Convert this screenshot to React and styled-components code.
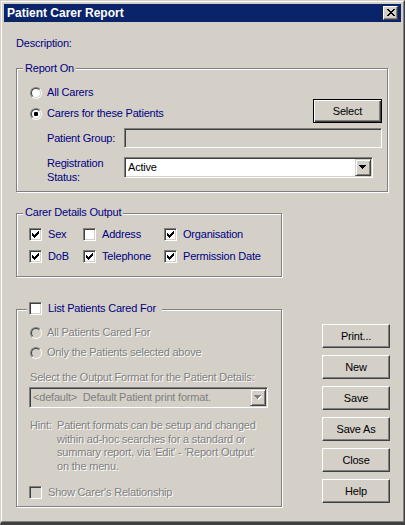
import React from 'react';
import styled, { createGlobalStyle, css } from 'styled-components';

const FACE = '#d4d0c8';
const SHADOW = '#808080';
const DARK = '#404040';
const NAVY = '#000080';

const GlobalStyle = createGlobalStyle`
  html, body { margin: 0; padding: 0; background: ${FACE}; }
  body { font-family: "Liberation Sans", Arial, sans-serif; font-size: 11px; }
  * { box-sizing: border-box; }
`;

const sunken = css`
  border: 1px solid;
  border-color: ${SHADOW} #fff #fff ${SHADOW};
  box-shadow: inset 1px 1px 0 ${DARK}, inset -1px -1px 0 ${FACE};
`;

const raised = css`
  border: 1px solid;
  border-color: #fff ${DARK} ${DARK} #fff;
  box-shadow: inset -1px -1px 0 ${SHADOW};
`;

const Window = styled.div`
  width: 405px;
  height: 525px;
  background: ${FACE};
  border: 1px solid;
  border-color: ${FACE} ${DARK} ${DARK} ${FACE};
  border-bottom-width: 3px;
  display: flex;
  flex-direction: column;
`;

const Frame = styled.div`
  flex: 1;
  border: 1px solid;
  border-color: #fff ${SHADOW} ${SHADOW} #fff;
  padding: 2px;
  display: flex;
  flex-direction: column;
`;

const TitleBar = styled.div`
  height: 18px;
  flex: none;
  background: #0a246a;
  display: flex;
  align-items: center;
  justify-content: space-between;
  padding: 0 3px 0 3px;
`;

const TitleText = styled.span`
  color: #fff;
  font-weight: bold;
  font-size: 12px;
  line-height: 14px;
`;

const CloseButton = styled.span`
  width: 15px;
  height: 14px;
  background: ${FACE};
  ${raised};
  display: flex;
  align-items: center;
  justify-content: center;
  padding-bottom: 1px;
`;

const Body = styled.div`
  flex: 1;
  padding: 15px 13px 0 12px;
  display: flex;
  flex-direction: column;
`;

const Label = styled.span`
  color: ${p => (p.$disabled ? SHADOW : NAVY)};
  text-shadow: ${p => (p.$disabled ? '1px 1px 0 #fff' : 'none')};
  line-height: 13px;
  letter-spacing: -0.2px;
  white-space: nowrap;
`;

const Description = styled(Label)`
  display: block;
  height: 13px;
`;

const Group = styled.div`
  position: relative;
  flex: none;
  border: 1px solid ${SHADOW};
  box-shadow: 1px 1px 0 #fff, inset 1px 1px 0 #fff;
  margin-top: ${p => p.$mt}px;
  width: ${p => (p.$w ? `${p.$w}px` : 'auto')};
  padding: ${p => p.$pad};
  display: flex;
  flex-direction: column;
`;

const Legend = styled.div`
  position: absolute;
  top: ${p => p.$top}px;
  left: ${p => p.$left}px;
  padding: ${p => p.$pad};
  background: ${FACE};
  display: flex;
  align-items: center;
  height: 13px;
`;

const OptionRow = styled.div`
  display: flex;
  align-items: center;
  height: 13px;
  gap: ${p => p.$gap}px;
  margin-top: ${p => p.$mt || 0}px;
  flex: none;
`;

const RadioCircle = styled.span`
  position: relative;
  flex: none;
  width: 12px;
  height: 12px;
  margin-left: 1px;
  border-radius: 50%;
  border: 1px solid;
  border-color: ${SHADOW} #fff #fff ${SHADOW};
  &::before {
    content: '';
    position: absolute;
    inset: 0;
    border-radius: 50%;
    border: 1px solid;
    border-color: ${DARK} ${FACE} ${FACE} ${DARK};
    background: ${p => (p.$disabled ? FACE : '#fff')};
  }
  &::after {
    content: ${p => (p.$checked ? "''" : 'none')};
    position: absolute;
    left: 3px;
    top: 3px;
    width: 4px;
    height: 4px;
    border-radius: 1px;
    background: #000;
  }
`;

const CheckBox = styled.span`
  flex: none;
  width: 13px;
  height: 13px;
  ${sunken};
  background: ${p => (p.$disabled ? FACE : '#fff')};
  display: flex;
  align-items: center;
  justify-content: center;
`;

const PushButton = styled.button`
  width: ${p => p.$w || 68}px;
  height: 24px;
  flex: none;
  padding: 0;
  background: ${FACE};
  color: #000;
  font-family: "Liberation Sans", Arial, sans-serif;
  font-size: 11px;
  letter-spacing: -0.2px;
  ${raised};
  ${p =>
    p.$default &&
    css`
      border: 1px solid #000;
      box-shadow: inset 1px 1px 0 #fff, inset -1px -1px 0 ${DARK}, inset -2px -2px 0 ${SHADOW};
    `}
`;

const SplitRow = styled.div`
  display: flex;
  justify-content: space-between;
  align-items: flex-start;
  height: 24px;
  flex: none;
`;

const FieldRow = styled.div`
  display: grid;
  grid-template-columns: 77px 1fr;
  align-items: ${p => p.$align || 'center'};
  padding-left: 18px;
  margin-top: ${p => p.$mt}px;
  flex: none;
`;

const FieldLabel = styled(Label)`
  line-height: ${p => p.$lh || 13}px;
  margin-top: ${p => p.$mt || 0}px;
`;

const TextField = styled.div`
  height: 20px;
  ${sunken};
  background: ${FACE};
`;

const ComboBox = styled.div`
  height: 21px;
  width: ${p => p.$w}px;
  margin-top: ${p => p.$mt || 0}px;
  ${sunken};
  background: ${p => (p.$disabled ? FACE : '#fff')};
  display: flex;
  align-items: center;
  padding: 0 1px 0 3px;
  flex: none;
`;

const ComboText = styled.span`
  flex: 1;
  color: ${p => (p.$disabled ? SHADOW : '#000')};
  letter-spacing: -0.2px;
  white-space: pre;
  line-height: 13px;
`;

const ComboArrow = styled.span`
  width: 16px;
  height: 17px;
  flex: none;
  background: ${FACE};
  border: 1px solid;
  border-color: ${FACE} ${DARK} ${DARK} ${FACE};
  box-shadow: inset 1px 1px 0 #fff, inset -1px -1px 0 ${SHADOW};
  display: flex;
  align-items: center;
  justify-content: center;
`;

const BottomRow = styled.div`
  display: flex;
  justify-content: space-between;
  align-items: flex-end;
`;

const LeftColumn = styled.div`
  display: flex;
  flex-direction: column;
  width: 266px;
`;

const ButtonColumn = styled.div`
  display: flex;
  flex-direction: column;
  gap: 7px;
  margin-bottom: 4px;
  margin-right: -2px;
`;

const CheckGrid = styled.div`
  display: grid;
  grid-template-columns: 54px 81px auto;
  row-gap: 9px;
`;

const FormatLabel = styled(Label)`
  display: block;
  margin: 12px 0 0 1px;
`;

const HintBlock = styled.div`
  display: grid;
  grid-template-columns: 27px auto;
  margin: 11px 0 0 1px;
  color: ${SHADOW};
  text-shadow: 1px 1px 0 #fff;
  line-height: 13.5px;
  letter-spacing: -0.2px;
  white-space: nowrap;
`;

const Check = ({ color = '#000' }) => (
  <svg width="7" height="7" viewBox="0 0 7 7" shapeRendering="crispEdges" fill={color}>
    <rect x="6" y="0" width="1" height="1" />
    <rect x="5" y="1" width="2" height="1" />
    <rect x="0" y="2" width="1" height="1" />
    <rect x="4" y="2" width="3" height="1" />
    <rect x="0" y="3" width="2" height="1" />
    <rect x="3" y="3" width="3" height="1" />
    <rect x="0" y="4" width="5" height="1" />
    <rect x="1" y="5" width="3" height="1" />
    <rect x="2" y="6" width="1" height="1" />
  </svg>
);

const CloseGlyph = () => (
  <svg width="8" height="7" viewBox="0 0 8 7" shapeRendering="crispEdges" fill="#000">
    <rect x="0" y="0" width="2" height="1" />
    <rect x="6" y="0" width="2" height="1" />
    <rect x="1" y="1" width="2" height="1" />
    <rect x="5" y="1" width="2" height="1" />
    <rect x="2" y="2" width="4" height="1" />
    <rect x="3" y="3" width="2" height="1" />
    <rect x="2" y="4" width="4" height="1" />
    <rect x="1" y="5" width="2" height="1" />
    <rect x="5" y="5" width="2" height="1" />
    <rect x="0" y="6" width="2" height="1" />
    <rect x="6" y="6" width="2" height="1" />
  </svg>
);

const DownArrow = ({ disabled }) => (
  <svg width="8" height="5" viewBox="0 0 8 5" shapeRendering="crispEdges">
    {disabled && (
      <g fill="#fff" transform="translate(1 1)">
        <rect x="0" y="0" width="7" height="1" />
        <rect x="1" y="1" width="5" height="1" />
        <rect x="2" y="2" width="3" height="1" />
        <rect x="3" y="3" width="1" height="1" />
      </g>
    )}
    <g fill={disabled ? SHADOW : '#000'}>
      <rect x="0" y="0" width="7" height="1" />
      <rect x="1" y="1" width="5" height="1" />
      <rect x="2" y="2" width="3" height="1" />
      <rect x="3" y="3" width="1" height="1" />
    </g>
  </svg>
);

const Radio = ({ label, checked, disabled, mt }) => (
  <OptionRow $gap={5} $mt={mt}>
    <RadioCircle $checked={checked} $disabled={disabled} />
    <Label $disabled={disabled}>{label}</Label>
  </OptionRow>
);

const CheckOption = ({ label, checked, disabled }) => (
  <OptionRow $gap={6}>
    <CheckBox $disabled={disabled}>{checked && <Check />}</CheckBox>
    <Label $disabled={disabled}>{label}</Label>
  </OptionRow>
);

const carerFields = [
  ['Sex', true],
  ['Address', false],
  ['Organisation', true],
  ['DoB', true],
  ['Telephone', true],
  ['Permission Date', true],
];

const actions = ['Print...', 'New', 'Save', 'Save As', 'Close', 'Help'];

export default function App() {
  return (
    <>
      <GlobalStyle />
      <Window>
        <Frame>
          <TitleBar>
            <TitleText>Patient Carer Report</TitleText>
            <CloseButton>
              <CloseGlyph />
            </CloseButton>
          </TitleBar>
          <Body>
            <Description>Description:</Description>

            <Group $mt={18} $pad="17px 5px 7px 12px">
              <Legend $top={-7} $left={6} $pad="0 2px">
                <Label>Report On</Label>
              </Legend>
              <Radio label="All Carers" />
              <SplitRow>
                <Radio label="Carers for these Patients" checked mt={8} />
                <PushButton $default $w={69}>Select</PushButton>
              </SplitRow>
              <FieldRow $mt={5}>
                <FieldLabel>Patient Group:</FieldLabel>
                <TextField />
              </FieldRow>
              <FieldRow $mt={9} $align="start">
                <FieldLabel $lh={14} $mt={-1}>
                  Registration
                  <br />
                  Status:
                </FieldLabel>
                <ComboBox $w={249}>
                  <ComboText>Active</ComboText>
                  <ComboArrow>
                    <DownArrow />
                  </ComboArrow>
                </ComboBox>
              </FieldRow>
            </Group>

            <BottomRow>
              <LeftColumn>
                <Group $mt={21} $w={266} $pad="14px 0 13px 12px">
                  <Legend $top={-8} $left={6} $pad="0 2px">
                    <Label>Carer Details Output</Label>
                  </Legend>
                  <CheckGrid>
                    {carerFields.map(([name, on]) => (
                      <CheckOption key={name} label={name} checked={on} />
                    ))}
                  </CheckGrid>
                </Group>

                <Group $mt={32} $w={266} $pad="16px 0 7px 12px">
                  <Legend $top={-8} $left={10} $pad="0 6px 0 2px">
                    <CheckOption label="List Patients Cared For" />
                  </Legend>
                  <Radio label="All Patients Cared For" disabled />
                  <Radio label="Only the Patients selected above" disabled mt={7} />
                  <FormatLabel $disabled>Select the Output Format for the Patient Details:</FormatLabel>
                  <ComboBox $w={239} $mt={3} $disabled>
                    <ComboText $disabled>{'<default>  Default Patient print format.'}</ComboText>
                    <ComboArrow>
                      <DownArrow disabled />
                    </ComboArrow>
                  </ComboBox>
                  <HintBlock>
                    <span>Hint:</span>
                    <span>
                      Patient formats can be setup and changed
                      <br />
                      within ad-hoc searches for a standard or
                      <br />
                      summary report, via 'Edit' - 'Report Output'
                      <br />
                      on the menu.
                    </span>
                  </HintBlock>
                  <OptionRow $gap={6} $mt={13}>
                    <CheckBox $disabled />
                    <Label $disabled>Show Carer's Relationship</Label>
                  </OptionRow>
                </Group>
              </LeftColumn>

              <ButtonColumn>
                {actions.map(a => (
                  <PushButton key={a}>{a}</PushButton>
                ))}
              </ButtonColumn>
            </BottomRow>
          </Body>
        </Frame>
      </Window>
    </>
  );
}
